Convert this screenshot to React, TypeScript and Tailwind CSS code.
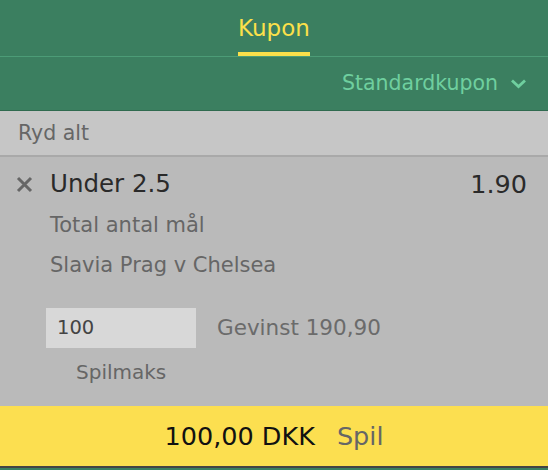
import React from "react";

function Chevron() {
  return (
    <svg width="17" height="11" viewBox="0 0 17 11" className="ml-[12px]">
      <path d="M2 2.5 L8.5 8.5 L15 2.5" fill="none" stroke="#6fcf9f" strokeWidth="2.8" />
    </svg>
  );
}

function CloseIcon() {
  return (
    <svg width="17" height="17" viewBox="0 0 17 17">
      <path d="M2 2 L15 15 M15 2 L2 15" stroke="#666" strokeWidth="3" />
    </svg>
  );
}

export default function App() {
  return (
    <div
      className="w-[548px] h-[470px] flex flex-col bg-[#3b7f60] overflow-hidden"
      style={{ fontFamily: '"DejaVu Sans", sans-serif' }}
    >
      <div className="h-[56px] flex justify-center items-end">
        <div className="flex flex-col items-center">
          <span className="text-[23px] leading-none text-[#fbe04a] pb-[12px]">Kupon</span>
          <div className="h-[4px] w-[72px] bg-[#fbe04a]" />
        </div>
      </div>
      <div className="h-[1px] bg-[#4c9c77]" />
      <div className="h-[53px] flex items-center justify-end pr-[21px]">
        <span className="text-[20.5px] text-[#6fcf9f]">Standardkupon</span>
        <Chevron />
      </div>
      <div className="h-[1px] bg-[#2f6a4f]" />
      <div className="h-[44px] bg-[#c6c6c6] flex items-center pl-[18px] border-b-2 border-[#a9a9a9] box-content">
        <span className="text-[20.5px] text-[#666]">Ryd alt</span>
      </div>
      <div className="h-[249px] bg-[#bababa] flex flex-col">
        <div className="flex items-center h-[30px] mt-[12px] pl-[16px] pr-[21px]">
          <CloseIcon />
          <span className="ml-[17px] text-[24.5px] leading-[30px] text-[#2a2a2a] flex-1">Under 2.5</span>
          <span className="text-[25.5px] leading-[30px] text-[#2a2a2a]">1.90</span>
        </div>
        <div className="pl-[50px] mt-[6px] text-[21px] leading-[40px] text-[#666] flex flex-col">
          <span>Total antal mål</span>
          <span>Slavia Prag v Chelsea</span>
        </div>
        <div className="flex items-center mt-[23px] pl-[46px]">
          <div className="w-[150px] h-[40px] bg-[#d8d8d8] flex items-center pl-[11px] text-[19.5px] text-[#444]">
            100
          </div>
          <span className="ml-[21px] text-[21.5px] text-[#6b6b6b]">Gevinst 190,90</span>
        </div>
        <span className="pl-[76px] mt-[12px] text-[20px] leading-[24px] text-[#666]">Spilmaks</span>
      </div>
      <div className="h-[60px] bg-[#fcdf50] flex items-center justify-center">
        <span className="text-[25.5px] text-[#111]">100,00 DKK</span>
        <span className="ml-[22px] text-[25.5px] text-[#666]">Spil</span>
      </div>
      <div className="h-[2px] bg-[#444]" />
      <div className="flex-1 bg-[#3b7f60]" />
    </div>
  );
}
